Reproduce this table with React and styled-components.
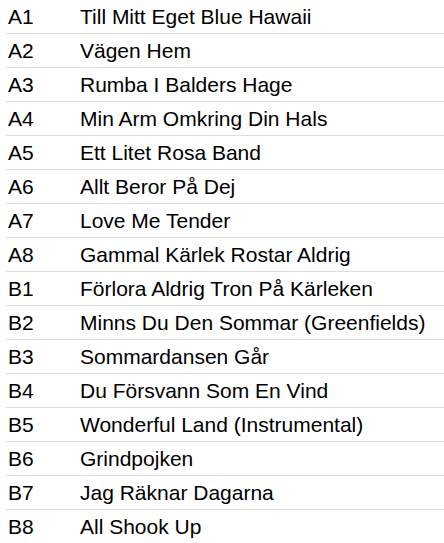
import React from "react";
import styled, { createGlobalStyle } from "styled-components";

const Global = createGlobalStyle`
  html, body { margin: 0; padding: 0; background: #fff; }
  body { font-family: "Liberation Sans", Arial, sans-serif; color: #000; }
`;

const Table = styled.table`
  border-collapse: collapse;
  margin-left: 6px;
  width: calc(100% - 6px);
  font-size: 21px;
`;

const Row = styled.tr`
  border-bottom: 1px solid #dedede;
`;

const Cell = styled.td`
  height: 33px;
  padding: 0 0 0 ${(p) => (p.$code ? "2px" : "0")};
  vertical-align: middle;
  white-space: nowrap;
  width: ${(p) => (p.$code ? "72px" : "auto")};
`;

const tracks = [
  ["A1", "Till Mitt Eget Blue Hawaii"],
  ["A2", "Vägen Hem"],
  ["A3", "Rumba I Balders Hage"],
  ["A4", "Min Arm Omkring Din Hals"],
  ["A5", "Ett Litet Rosa Band"],
  ["A6", "Allt Beror På Dej"],
  ["A7", "Love Me Tender"],
  ["A8", "Gammal Kärlek Rostar Aldrig"],
  ["B1", "Förlora Aldrig Tron På Kärleken"],
  ["B2", "Minns Du Den Sommar (Greenfields)"],
  ["B3", "Sommardansen Går"],
  ["B4", "Du Försvann Som En Vind"],
  ["B5", "Wonderful Land (Instrumental)"],
  ["B6", "Grindpojken"],
  ["B7", "Jag Räknar Dagarna"],
  ["B8", "All Shook Up"],
];

export default function App() {
  return (
    <>
      <Global />
      <Table>
        <tbody>
          {tracks.map(([c, t]) => (
            <Row key={c}>
              <Cell $code>{c}</Cell>
              <Cell>{t}</Cell>
            </Row>
          ))}
        </tbody>
      </Table>
    </>
  );
}
